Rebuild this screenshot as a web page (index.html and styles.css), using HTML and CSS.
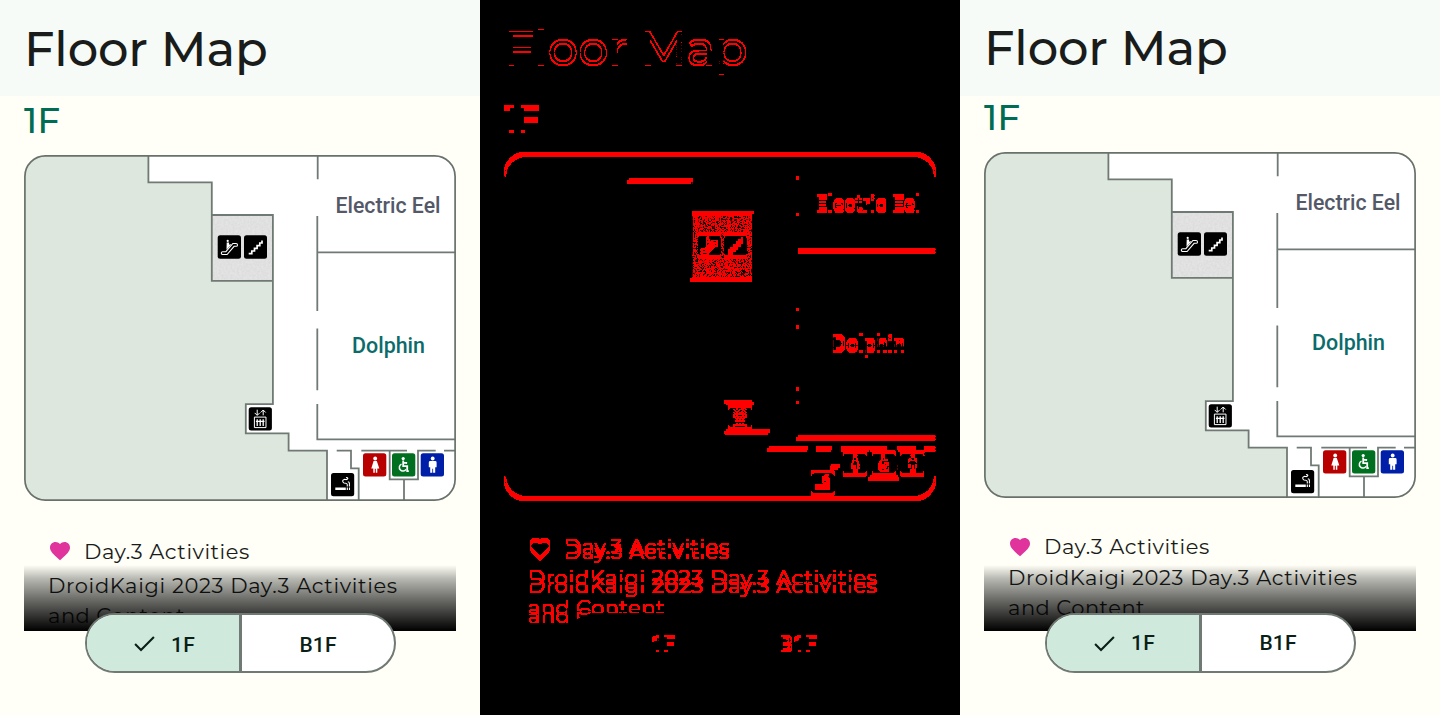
FILE: index.html
```html
<!DOCTYPE html>
<html lang="en">
<head>
<meta charset="utf-8">
<title>Floor Map</title>
<link rel="stylesheet" href="styles.css">
</head>
<body>
<svg class="defs" width="0" height="0" aria-hidden="true">
  <defs>
    <filter id="threshold" color-interpolation-filters="sRGB" x="0" y="0" width="100%" height="100%">
      <feColorMatrix type="matrix" values="120 120 120 0 -1  0 0 0 0 0  0 0 0 0 0  0 0 0 0 1"/>
    </filter>
    <filter id="grain" color-interpolation-filters="sRGB" x="0" y="0" width="100%" height="100%">
      <feTurbulence type="fractalNoise" baseFrequency="0.45" numOctaves="2" seed="4"/>
      <feColorMatrix type="matrix" values="0.07 0 0 0 0.845  0.06 0.01 0 0 0.845  0.06 0 0.01 0 0.845  0 0 0 0 1"/>
    </filter>
    <clipPath id="frame"><rect x="0.7" y="0.7" width="430.6" height="344.6" rx="20.5"/></clipPath>
    <symbol id="map" viewBox="0 0 432 346">
      <g clip-path="url(#frame)">
        <rect width="432" height="346" fill="#fff"/>
        <path fill="#dde7de" d="M0 0H124.4V27.4H187.8V60V125.8H248.9V249.2H221.8V278.4H264.6V295.6H303V346H0Z"/>
        <rect x="187.8" y="60" width="61.1" height="65.8" filter="url(#grain)"/>
        <g class="soft" fill="none" stroke="#707a74" stroke-width="1.8">
          <path d="M124.4 0V27.4H187.8V125.8H248.9M187.8 60H248.9V249.2H221.8V278.4H264.6V295.6H303V346"/>
          <path d="M293.7 0V24.3M293.3 61V156M293.3 173.5V235.2M293.3 249V284.4H432M293.3 97.4H432"/>
          <path d="M312.7 295.6H327V313.3H334.7V346M337.3 295.6H383M365.7 295.6V324.3H394V295.6H411.7M420 295.6H432M380 324.3V346"/>
        </g>
        <g class="soft">
        <g transform="translate(193.7 80.3)">
          <rect width="23.3" height="23.5" rx="2.5"/>
          <path d="M5 16.4H8.2L15.2 8.2H18.4A1.4 1.4 0 0 1 18.4 11H16.4L9.4 19.2H5A1.4 1.4 0 0 1 5 16.4Z" fill="none" stroke="#fff" stroke-width="1.1"/>
          <path d="M9 7.3h2.4v2.2l1.8-.9-.1 1.2-4.3 4.6z" fill="#fff"/><circle cx="10" cy="5.6" r="1.1" fill="#fff"/>
        </g>
        <g transform="translate(220 80.3)">
          <rect width="23" height="23.5" rx="2.5"/>
          <path d="M4.7 18.4H7.8V15.7H10.5V13H13.1V10.3H15.8V7.7H18V5.2" fill="none" stroke="#fff" stroke-width="1.7"/>
        </g>
        <g transform="translate(224.7 252.3)">
          <rect width="23.2" height="23.3" rx="2.5"/>
          <path d="M8.5 2.4V7.8M6 5.6l2.5 2.5L11 5.6M14.5 8V2.9M12 5.2l2.5-2.5L17 5.2" fill="none" stroke="#fff" stroke-width="1"/>
          <path d="M5.7 9.8H17.3V20.3H5.7Z" fill="none" stroke="#fff" stroke-width="1"/>
          <path d="M8.5 12V18.6M11.5 12V18.6M14.5 12V18.6M7.2 14.1H15.8" fill="none" stroke="#fff" stroke-width="1.3"/>
        </g>
        <g transform="translate(307 318)">
          <rect width="23.2" height="23.3" rx="2.5"/>
          <path d="M4.3 14.4H14.8V16.9H4.3ZM15.7 14.4H16.9V16.9H15.7ZM17.9 14.4H19V16.9H17.9Z" fill="#fff"/>
          <path d="M16.3 13.6V11.7Q16.3 10.4 14.8 10.2L13 10Q11.2 9.2 11.8 7.3L13.5 6.3Q16.2 7.2 16.8 5.5Q16.8 4.2 15 4.7M18.4 13.6V10.2Q18.2 8.9 16.8 8.7" fill="none" stroke="#fff" stroke-width="1.1"/>
        </g>
        <g transform="translate(339 298.3)">
          <rect width="23.3" height="23.3" rx="2.5" fill="#b90000"/>
          <circle cx="12.2" cy="5.2" r="1.9" fill="#fff"/>
          <path d="M10.6 7.8h3.2l2.5 7.3h-2v4.3h-1.5v-4h-1v4h-1.5v-4.3h-2z" fill="#fff"/>
        </g>
        <g transform="translate(368 298.3)">
          <rect width="23.3" height="23.3" rx="2.5" fill="#007020"/>
          <circle cx="11.2" cy="5.3" r="1.6" fill="#fff"/>
          <path d="M11.2 7.2V12.8H15.2V17.8H16.8M11.4 9.4L15.1 9.7" fill="none" stroke="#fff" stroke-width="1.8"/>
          <path d="M9.5 10.8A3.6 3.6 0 1 0 14 16" fill="none" stroke="#fff" stroke-width="1.5"/>
        </g>
        <g transform="translate(396.7 298.3)">
          <rect width="23.3" height="23.3" rx="2.5" fill="#001fa8"/>
          <circle cx="12" cy="5.2" r="1.9" fill="#fff"/>
          <path d="M9.5 7.8h5q1.4 0 1.4 1.4v4.8h-1.4v5.4h-2.1v-4h-.8v4H9.5V14H8.1V9.2q0-1.4 1.4-1.4z" fill="#fff"/>
        </g>
        </g>
        <text class="room room-eel" x="311.5" y="58" textLength="105" lengthAdjust="spacingAndGlyphs">Electric Eel</text>
        <text class="room room-dolphin" x="328" y="198" textLength="73" lengthAdjust="spacingAndGlyphs">Dolphin</text>
      </g>
      <rect class="soft" x="0.9" y="0.9" width="430.2" height="344.2" rx="20.5" fill="none" stroke="#68716b" stroke-width="1.7"/>
    </symbol>
    <symbol id="heart" viewBox="0 0 24 24">
      <path fill="#e0339c" d="M12 21.35l-1.45-1.32C5.4 15.36 2 12.28 2 8.5 2 5.42 4.42 3 7.5 3c1.74 0 3.41.81 4.5 2.09C13.09 3.81 14.76 3 16.5 3 19.58 3 22 5.42 22 8.5c0 3.78-3.4 6.86-8.55 11.54L12 21.35z"/>
    </symbol>
    <symbol id="check" viewBox="0 0 27 27">
      <path fill="none" stroke="#0b1f19" stroke-width="2.1" d="M4.1 14.1L10 19.9L22.9 7"/>
    </symbol>
  </defs>
</svg>

<main class="compare">
  <section class="screen before">
    <header class="bar"><h1 class="title">Floor Map</h1></header>
    <div class="content">
      <h2 class="floor">1F</h2>
      <svg class="map"><use href="#map"/></svg>
      <div class="event"><svg class="heart"><use href="#heart"/></svg><span class="event-name">Day.3 Activities</span></div>
      <p class="about">DroidKaigi 2023 Day.3 Activities<br><span class="about-end">and Content</span></p>
    </div>
    <div class="fade"></div>
    <div class="switch">
      <div class="option selected"><svg class="check"><use href="#check"/></svg><span class="label">1F</span></div>
      <div class="option"><span class="label">B1F</span></div>
    </div>
  </section>

  <div class="diff" aria-hidden="true">
    <section class="screen before">
      <header class="bar"><div class="title">Floor Map</div></header>
      <div class="content">
        <div class="floor">1F</div>
        <svg class="map"><use href="#map"/></svg>
        <div class="event"><svg class="heart"><use href="#heart"/></svg><span class="event-name">Day.3 Activities</span></div>
        <p class="about">DroidKaigi 2023 Day.3 Activities<br><span class="about-end">and Content</span></p>
      </div>
      <div class="fade"></div>
      <div class="switch">
        <div class="option selected"><svg class="check"><use href="#check"/></svg><span class="label">1F</span></div>
        <div class="option"><span class="label">B1F</span></div>
      </div>
    </section>
    <section class="screen after">
      <header class="bar"><div class="title">Floor Map</div></header>
      <div class="content">
        <div class="floor">1F</div>
        <svg class="map"><use href="#map"/></svg>
        <div class="event"><svg class="heart"><use href="#heart"/></svg><span class="event-name">Day.3 Activities</span></div>
        <p class="about">DroidKaigi 2023 Day.3 Activities<br><span class="about-end">and Content</span></p>
      </div>
      <div class="fade"></div>
      <div class="switch">
        <div class="option selected"><svg class="check"><use href="#check"/></svg><span class="label">1F</span></div>
        <div class="option"><span class="label">B1F</span></div>
      </div>
    </section>
  </div>

  <section class="screen after">
    <header class="bar"><h1 class="title">Floor Map</h1></header>
    <div class="content">
      <h2 class="floor">1F</h2>
      <svg class="map"><use href="#map"/></svg>
      <div class="event"><svg class="heart"><use href="#heart"/></svg><span class="event-name">Day.3 Activities</span></div>
      <p class="about">DroidKaigi 2023 Day.3 Activities<br><span class="about-end">and Content</span></p>
    </div>
    <div class="fade"></div>
    <div class="switch">
      <div class="option selected"><svg class="check"><use href="#check"/></svg><span class="label">1F</span></div>
      <div class="option"><span class="label">B1F</span></div>
    </div>
  </section>
</main>
</body>
</html>
```
FILE: styles.css
```css
* { box-sizing: border-box; }
body { margin: 0; overflow: hidden; background: #fffff7; font-family: Montserrat, Inter, "Open Sans", sans-serif; color: #191c1a; }
.defs { position: absolute; }
.compare { display: grid; grid-template-columns: repeat(3, 480px); height: 715px; }

.screen { position: relative; width: 480px; height: 715px; overflow: hidden; background: #fffff7; isolation: isolate; }
.bar { height: 96px; padding: 0 0 0 24px; background: #f6fbf7; }
.title { margin: 0; font-size: 48px; line-height: var(--title-line); font-weight: 500; letter-spacing: -0.12px; white-space: nowrap; }
.content { display: flex; flex-direction: column; padding: 0 24px; }
.floor { margin: 0 0 var(--floor-gap); font-size: 36px; line-height: var(--floor-line); font-weight: 500; color: #006c53; }
.map { display: block; width: 432px; height: 346px; flex: none; }
.soft { filter: blur(0.35px); }
.room { font-family: Roboto, sans-serif; font-size: 21.5px; font-weight: 500; }
.room-eel { fill: #545968; }
.room-dolphin { fill: #0b6b6b; }
.event { display: flex; gap: 12px; height: 24px; margin-top: var(--event-gap); padding-left: 24px; }
.heart { width: 24px; height: 24px; flex: none; }
.event-name { font-size: 21px; line-height: var(--event-line); letter-spacing: 0.55px; font-weight: 400; }
.about { margin: var(--about-gap) 0 0; padding-left: 24px; font-size: 21px; line-height: 30px; letter-spacing: 0.65px; font-weight: 400; white-space: nowrap; }
.about-end { letter-spacing: 0.5px; }
.fade { position: absolute; left: 24px; top: 565px; width: 432px; height: 66px; background: linear-gradient(to bottom, transparent, rgba(0, 0, 0, 0.27) 20%, rgba(0, 0, 0, 0.56) 50%, #000); }
.switch { position: absolute; left: 85px; top: 613px; width: 311px; height: 60px; display: grid; grid-template-columns: 155px 1fr; border: 2px solid #707973; border-radius: 30px; overflow: hidden; background: #fff; }
.option { display: flex; align-items: center; justify-content: center; }
.selected { gap: 13px; background: #cfeadd; border-right: 3px solid #707973; }
.check { width: 27px; height: 27px; }
.label { font-family: Roboto, sans-serif; font-size: 21px; line-height: 24px; font-weight: 500; letter-spacing: 0.15px; color: #0b1f19; padding-top: var(--label-pad); }

.before { --title-line: 98px; --floor-line: 48px; --floor-gap: 11px; --event-gap: 38px; --event-line: 25px; --about-gap: 8px; --label-pad: 4px; }
.after { --title-line: 96px; --floor-line: 43px; --floor-gap: 13px; --event-gap: 37px; --event-line: 23px; --about-gap: 4px; --label-pad: 0px; }

/* Both versions are stacked, subtracted, and every changed pixel turns red. */
.diff { display: grid; width: 480px; height: 715px; overflow: hidden; isolation: isolate; background: #000; filter: url(#threshold); }
.diff .screen { grid-area: 1 / 1; }
.diff .after { mix-blend-mode: difference; }
```
